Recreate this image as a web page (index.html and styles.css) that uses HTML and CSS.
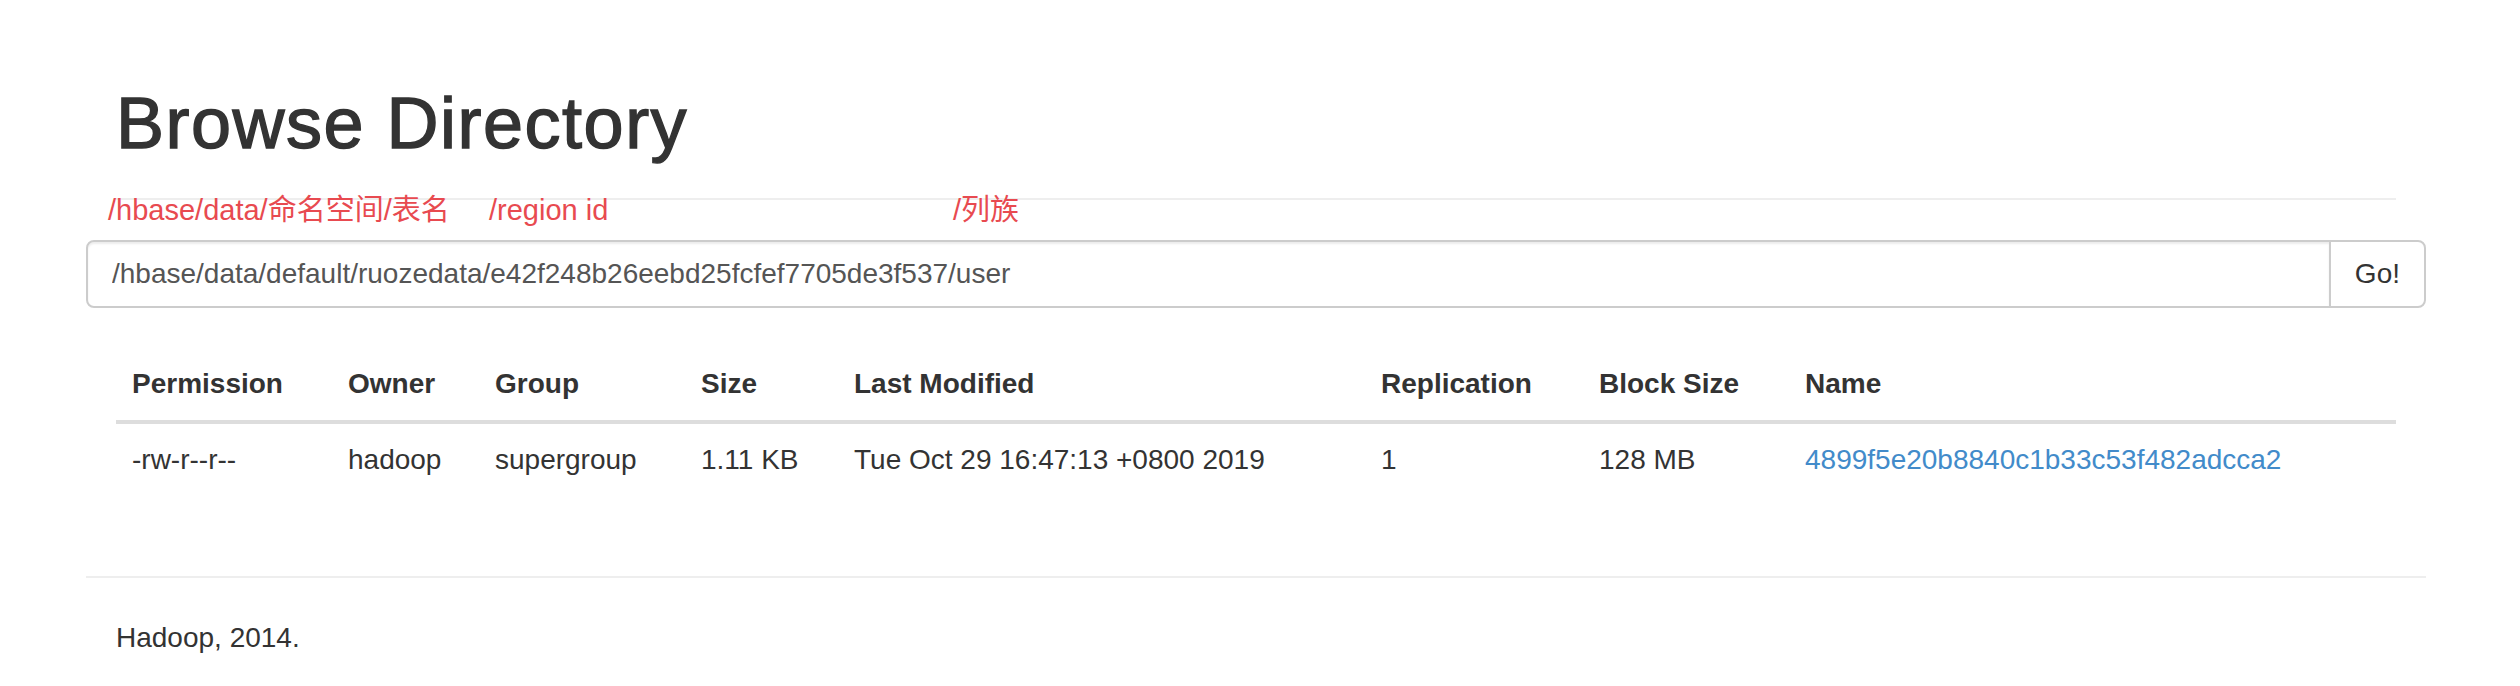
FILE: index.html
```html
<!DOCTYPE html>
<html lang="zh-CN">
<head>
<meta charset="utf-8">
<title>Browsing HDFS</title>
<link rel="stylesheet" href="styles.css">
</head>
<body>
<div class="container">
  <div class="page-header">
    <h1>Browse Directory</h1>
  </div>

  <div class="notes">
    <span class="note note-ns">/hbase/data/命名空间/表名</span>
    <span class="note note-region">/region id</span>
    <span class="note note-cf">/列族</span>
  </div>

  <div class="row">
    <form class="dir-form" onsubmit="return false;">
      <div class="input-group">
        <input type="text" class="form-control" value="/hbase/data/default/ruozedata/e42f248b26eebd25fcfef7705de3f537/user">
        <span class="input-group-btn"><button class="btn" type="button">Go!</button></span>
      </div>
    </form>
  </div>

  <div class="panel">
    <table class="table">
      <colgroup>
        <col class="c-perm"><col class="c-owner"><col class="c-group"><col class="c-size">
        <col class="c-mod"><col class="c-rep"><col class="c-block"><col class="c-name">
      </colgroup>
      <thead>
        <tr>
          <th>Permission</th>
          <th>Owner</th>
          <th>Group</th>
          <th>Size</th>
          <th>Last Modified</th>
          <th>Replication</th>
          <th>Block Size</th>
          <th>Name</th>
        </tr>
      </thead>
      <tbody>
        <tr>
          <td>-rw-r--r--</td>
          <td>hadoop</td>
          <td>supergroup</td>
          <td>1.11 KB</td>
          <td>Tue Oct 29 16:47:13 +0800 2019</td>
          <td>1</td>
          <td>128 MB</td>
          <td><a href="#" class="file-link">4899f5e20b8840c1b33c53f482adcca2</a></td>
        </tr>
      </tbody>
    </table>
  </div>

  <div class="row">
    <hr class="footer-rule">
    <div class="col">
      <p class="copy">Hadoop, 2014.</p>
    </div>
  </div>
</div>
</body>
</html>
```

FILE: styles.css
```css
* {
  box-sizing: border-box;
}

html, body {
  background: #fff;
}

body {
  margin: 0;
  padding-right: 8px;
  font-family: "Liberation Sans", Arial, "Noto Sans CJK SC", sans-serif;
  font-size: 28px;
  line-height: 40px;
  color: #333;
}

.container {
  position: relative;
  width: 2340px;
  margin: 0 auto;
  padding: 84px 30px 0;
}

.page-header {
  margin: 0 0 40px;
  padding-bottom: 18px;
  border-bottom: 2px solid #eee;
}

.page-header h1 {
  margin: 0 0 17px;
  font-size: 72px;
  line-height: 79.2px;
  font-weight: 400;
  color: #333;
  letter-spacing: 1.5px;
  -webkit-text-stroke: 1.4px #333;
}

/* red annotations laid over the page header */
.notes {
  position: absolute;
  top: 196px;
  left: 0;
  right: 0;
  height: 0;
}

.note {
  position: absolute;
  top: 0;
  font-family: "Liberation Sans", "Noto Sans CJK SC", sans-serif;
  font-size: 29px;
  line-height: 29px;
  color: #e84a50;
  white-space: nowrap;
}

.note-ns { left: 22px; }
.note-region { left: 403px; }
.note-cf { left: 867px; }

.row {
  display: flow-root;
  margin: 0 -30px;
}

.dir-form {
  margin: 0;
}

.input-group {
  display: flex;
}

.form-control {
  flex: 1;
  height: 68px;
  padding: 12px 24px;
  font-family: "Liberation Sans", Arial, sans-serif;
  font-size: 28px;
  line-height: 40px;
  color: #555;
  background: #fff;
  border: 2px solid #ccc;
  border-radius: 8px 0 0 8px;
  box-shadow: inset 0 2px 2px rgba(0, 0, 0, 0.075);
  outline: none;
}

.input-group-btn {
  display: flex;
}

.btn {
  height: 68px;
  margin-left: -2px;
  padding: 0 24px;
  font-family: "Liberation Sans", Arial, sans-serif;
  font-size: 28px;
  line-height: 40px;
  color: #333;
  background: #fff;
  border: 2px solid #ccc;
  border-radius: 0 8px 8px 0;
  cursor: pointer;
}

.panel {
  margin-top: 40px;
}

.table {
  width: 100%;
  table-layout: fixed;
  border-collapse: collapse;
  border-spacing: 0;
  margin-bottom: 40px;
}

.c-perm { width: 216px; }
.c-owner { width: 147px; }
.c-group { width: 206px; }
.c-size { width: 153px; }
.c-mod { width: 527px; }
.c-rep { width: 218px; }
.c-block { width: 206px; }
.c-name { width: 607px; }

.table th,
.table td {
  padding: 16px;
  text-align: left;
  vertical-align: bottom;
  white-space: nowrap;
  line-height: 40px;
}

.table th {
  font-weight: 700;
  border-bottom: 4px solid #ddd;
}

.table td {
  vertical-align: top;
  border-top: 2px solid #ddd;
}

.file-link {
  color: #428bca;
  text-decoration: none;
}

.footer-rule {
  margin: 40px 0;
  border: 0;
  border-top: 2px solid #eee;
  height: 0;
}

.col {
  padding: 0 30px;
}

.copy {
  margin: 0 0 20px;
}
```
